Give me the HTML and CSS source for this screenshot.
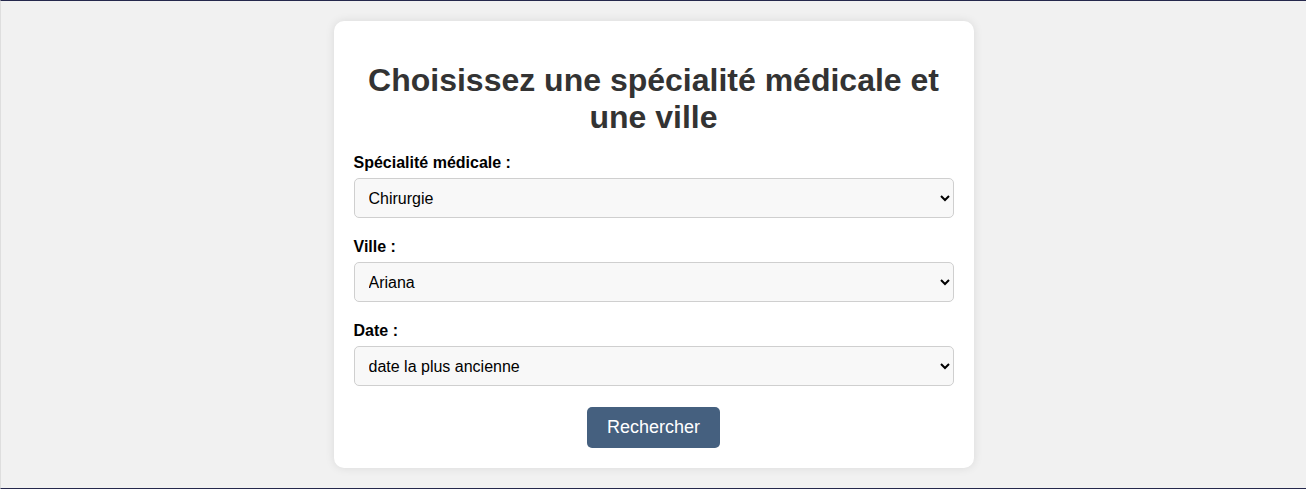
FILE: index.html
```html
<!DOCTYPE html>
<html lang="fr">
<head>
<meta charset="utf-8">
<title>Recherche</title>
<link rel="stylesheet" href="styles.css">
</head>
<body>
<div class="page">
  <form class="card">
    <h1 class="title">Choisissez une spécialité médicale et une ville</h1>
    <div class="field">
      <label class="label" for="spec">Spécialité médicale :</label>
      <select class="select" id="spec">
        <option>Chirurgie</option>
      </select>
    </div>
    <div class="field">
      <label class="label" for="ville">Ville :</label>
      <select class="select" id="ville">
        <option>Ariana</option>
      </select>
    </div>
    <div class="field">
      <label class="label" for="date">Date :</label>
      <select class="select" id="date">
        <option>date la plus ancienne</option>
      </select>
    </div>
    <div class="actions">
      <button class="btn" type="button">Rechercher</button>
    </div>
  </form>
</div>
</body>
</html>
```

FILE: styles.css
```css
html, body {
  margin: 0;
  padding: 0;
}
body {
  font-family: "Liberation Sans", Arial, sans-serif;
  background: #f1f1f1;
}
.page {
  box-sizing: border-box;
  height: 489px;
  border-top: 1px solid #25284c;
  border-bottom: 1px solid #25284c;
  border-left: 1px solid #dedede;
  padding-top: 20px;
  display: flex;
  flex-direction: column;
  align-items: center;
}
.card {
  box-sizing: border-box;
  width: 640px;
  padding: 20px;
  background: #fff;
  border-radius: 10px;
  box-shadow: 0 0 10px rgba(0, 0, 0, 0.1);
}
.title {
  margin: 21px 0 18px;
  font-size: 32px;
  line-height: 37px;
  font-weight: bold;
  color: #333;
  text-align: center;
}
.field {
  display: flex;
  flex-direction: column;
  margin-bottom: 20px;
}
.label {
  font-size: 16px;
  line-height: 18px;
  font-weight: bold;
  color: #000;
  margin-bottom: 6px;
}
.select {
  box-sizing: border-box;
  height: 40px;
  width: 100%;
  padding: 0 10px;
  font-family: "Liberation Sans", Arial, sans-serif;
  font-size: 16px;
  color: #000;
  background-color: #f8f8f8;
  border: 1px solid #cfcfcf;
  border-radius: 5px;
}
.actions {
  display: flex;
  justify-content: center;
  padding-top: 1px;
}
.btn {
  box-sizing: border-box;
  height: 41px;
  padding: 0 20px;
  font-family: "Liberation Sans", Arial, sans-serif;
  font-size: 18px;
  color: #fff;
  background: #45607f;
  border: none;
  border-radius: 5px;
}
```
